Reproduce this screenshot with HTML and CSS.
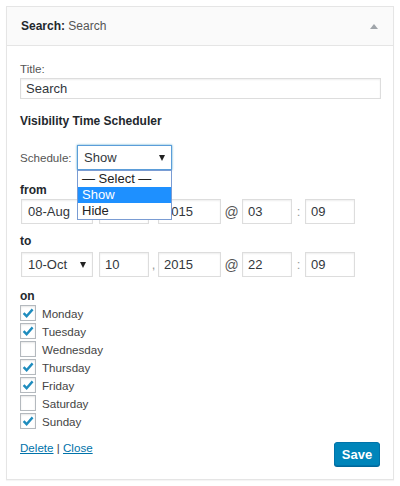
FILE: index.html
```html
<!DOCTYPE html>
<html>
<head>
<meta charset="utf-8">
<link rel="stylesheet" href="styles.css">
</head>
<body>
<div class="widget">
  <div class="widget-top">
    <h3 class="widget-title">Search: <span class="in-title">Search</span></h3>
    <span class="toggle"></span>
  </div>
  <div class="widget-inside">
    <div class="lbl">Title:</div>
    <div class="field wide">Search</div>

    <div class="heading">Visibility Time Scheduler</div>

    <div class="sched-row">
      <span class="sched-label">Schedule:</span>
      <div class="select-wrap">
        <div class="select focus">Show<svg class="arrow" width="6" height="6" viewBox="0 0 6 6"><polygon points="0,0 6,0 3,6" fill="#222"/></svg></div>
        <ul class="dropdown">
          <li class="opt">— Select —</li>
          <li class="opt selected">Show</li>
          <li class="opt">Hide</li>
        </ul>
      </div>
    </div>

    <div class="sub">from</div>
    <div class="date-row">
      <div class="select month">08-Aug<svg class="arrow" width="6" height="6" viewBox="0 0 6 6"><polygon points="0,0 6,0 3,6" fill="#222"/></svg></div>
      <div class="field short"></div>
      <span class="sep comma">,</span>
      <div class="field year">2015</div>
      <span class="sep at">@</span>
      <div class="field short">03</div>
      <span class="sep colon">:</span>
      <div class="field short">09</div>
    </div>

    <div class="sub to">to</div>
    <div class="date-row second">
      <div class="select month">10-Oct<svg class="arrow" width="6" height="6" viewBox="0 0 6 6"><polygon points="0,0 6,0 3,6" fill="#222"/></svg></div>
      <div class="field short">10</div>
      <span class="sep comma">,</span>
      <div class="field year">2015</div>
      <span class="sep at">@</span>
      <div class="field short">22</div>
      <span class="sep colon">:</span>
      <div class="field short">09</div>
    </div>

    <div class="sub on">on</div>
    <ul class="days">
      <li class="day"><span class="cb checked"><svg width="14" height="14" viewBox="0 0 14 14"><path d="M2.6 7.2 L5.6 10.2 L11.6 3.4" fill="none" stroke="#1e8cbe" stroke-width="2.4"/></svg></span>Monday</li>
      <li class="day"><span class="cb checked"><svg width="14" height="14" viewBox="0 0 14 14"><path d="M2.6 7.2 L5.6 10.2 L11.6 3.4" fill="none" stroke="#1e8cbe" stroke-width="2.4"/></svg></span>Tuesday</li>
      <li class="day"><span class="cb"></span>Wednesday</li>
      <li class="day"><span class="cb checked"><svg width="14" height="14" viewBox="0 0 14 14"><path d="M2.6 7.2 L5.6 10.2 L11.6 3.4" fill="none" stroke="#1e8cbe" stroke-width="2.4"/></svg></span>Thursday</li>
      <li class="day"><span class="cb checked"><svg width="14" height="14" viewBox="0 0 14 14"><path d="M2.6 7.2 L5.6 10.2 L11.6 3.4" fill="none" stroke="#1e8cbe" stroke-width="2.4"/></svg></span>Friday</li>
      <li class="day"><span class="cb"></span>Saturday</li>
      <li class="day"><span class="cb checked"><svg width="14" height="14" viewBox="0 0 14 14"><path d="M2.6 7.2 L5.6 10.2 L11.6 3.4" fill="none" stroke="#1e8cbe" stroke-width="2.4"/></svg></span>Sunday</li>
    </ul>

    <div class="actions">
      <div class="links"><a href="#">Delete</a> | <a href="#">Close</a></div>
      <button class="save">Save</button>
    </div>
  </div>
</div>
</body>
</html>
```

FILE: styles.css
```css
* { box-sizing: border-box; }
html, body { margin: 0; padding: 0; background: #fff; }
body {
  font-family: "Liberation Sans", Arial, sans-serif;
  font-size: 11.6px;
  color: #444;
  padding: 6px;
}
.widget {
  width: 388px;
  height: 474px;
  border: 1px solid #e5e5e5;
  box-shadow: 0 1px 1px rgba(0,0,0,0.04);
  background: #fff;
}
.widget-top {
  height: 39px;
  background: #fafafa;
  border-bottom: 1px solid #e5e5e5;
  display: flex;
  align-items: center;
  justify-content: space-between;
  padding: 0 14px 0 14px;
}
.widget-title {
  margin: 0;
  font-size: 12px;
  font-weight: bold;
  color: #23282d;
}
.in-title { font-weight: normal; color: #555; }
.toggle {
  width: 0; height: 0;
  border-left: 4px solid transparent;
  border-right: 4px solid transparent;
  border-bottom: 5px solid #a0a5aa;
  margin-right: 1px;
}
.widget-inside {
  padding: 15px 12px 0 13px;
}
.lbl { line-height: 16px; color: #555; }
.field {
  border: 1px solid #ddd;
  box-shadow: inset 0 1px 2px rgba(0,0,0,0.07);
  background: #fff;
  color: #32373c;
  font-size: 13px;
  display: flex;
  align-items: center;
  padding: 0 5px;
}
.field.wide { margin-top: 1px; height: 21px; width: 100%; }
.heading {
  margin-top: 14px;
  line-height: 16px;
  font-weight: bold;
  color: #23282d;
  font-size: 12px;
}
.sched-row {
  margin-top: 16px;
  display: flex;
  align-items: center;
  height: 25px;
}
.sched-label { width: 57px; color: #555; }
.select-wrap { position: relative; }
.select {
  height: 25px;
  border: 1px solid #ddd;
  background: #fff;
  display: flex;
  align-items: center;
  justify-content: space-between;
  padding: 0 6px 0 6px;
  color: #32373c;
  font-size: 13px;
  box-shadow: inset 0 1px 2px rgba(0,0,0,0.07);
}
.select.focus {
  width: 95px;
  border-color: #5b9dd9;
  box-shadow: 0 0 2px rgba(30,140,190,0.8);
}
.dropdown {
  position: absolute;
  left: 0;
  top: 25px;
  width: 95px;
  margin: 0;
  padding: 0;
  list-style: none;
  background: #fff;
  border: 1px solid #7a9cd3;
  z-index: 5;
}
.opt {
  height: 16px;
  line-height: 16px;
  padding: 0 4px;
  color: #222;
  font-size: 13px;
}
.opt.selected { background: #1e90ff; color: #fff; }
.sub {
  margin-top: 12px;
  line-height: 16px;
  font-weight: bold;
  color: #23282d;
  font-size: 12px;
}
.sub.to { margin-top: 9px; }
.sub.on { margin-top: 11px; }
.date-row {
  margin-top: 1px;
  display: flex;
  align-items: center;
  height: 25px;
}
.date-row.second { margin-top: 3px; }
.select.month { width: 72px; margin-left: 1px; margin-right: 6px; }
.field.short { width: 50px; height: 25px; }
.field.year { width: 63px; height: 25px; }
.sep { color: #999; text-align: center; font-size: 13px; }
.sep.comma { width: 9px; }
.sep.at { width: 21px; color: #555; font-size: 14px; }
.sep.colon { width: 13px; }
.days {
  list-style: none;
  margin: 0;
  padding: 0;
}
.day {
  height: 18px;
  display: flex;
  align-items: center;
  color: #444;
}
.cb {
  width: 16px;
  height: 16px;
  border: 1px solid #b4b9be;
  background: #fff;
  box-shadow: inset 0 1px 2px rgba(0,0,0,0.1);
  margin-right: 6px;
  display: flex;
  align-items: center;
  justify-content: center;
}
.actions {
  margin-top: 10px;
  display: flex;
  justify-content: space-between;
  align-items: flex-start;
  padding-right: 1px;
}
.links { line-height: 16px; color: #444; }
.links a { color: #0073aa; text-decoration: underline; }
.save {
  margin-top: 2px;
  height: 24px;
  width: 46px;
  padding: 0;
  border: 1px solid #0073aa;
  border-radius: 3px;
  background: #0085ba;
  box-shadow: 0 1px 0 #006799;
  color: #fff;
  font-family: "Liberation Sans", Arial, sans-serif;
  font-size: 13px;
  font-weight: bold;
}
```
